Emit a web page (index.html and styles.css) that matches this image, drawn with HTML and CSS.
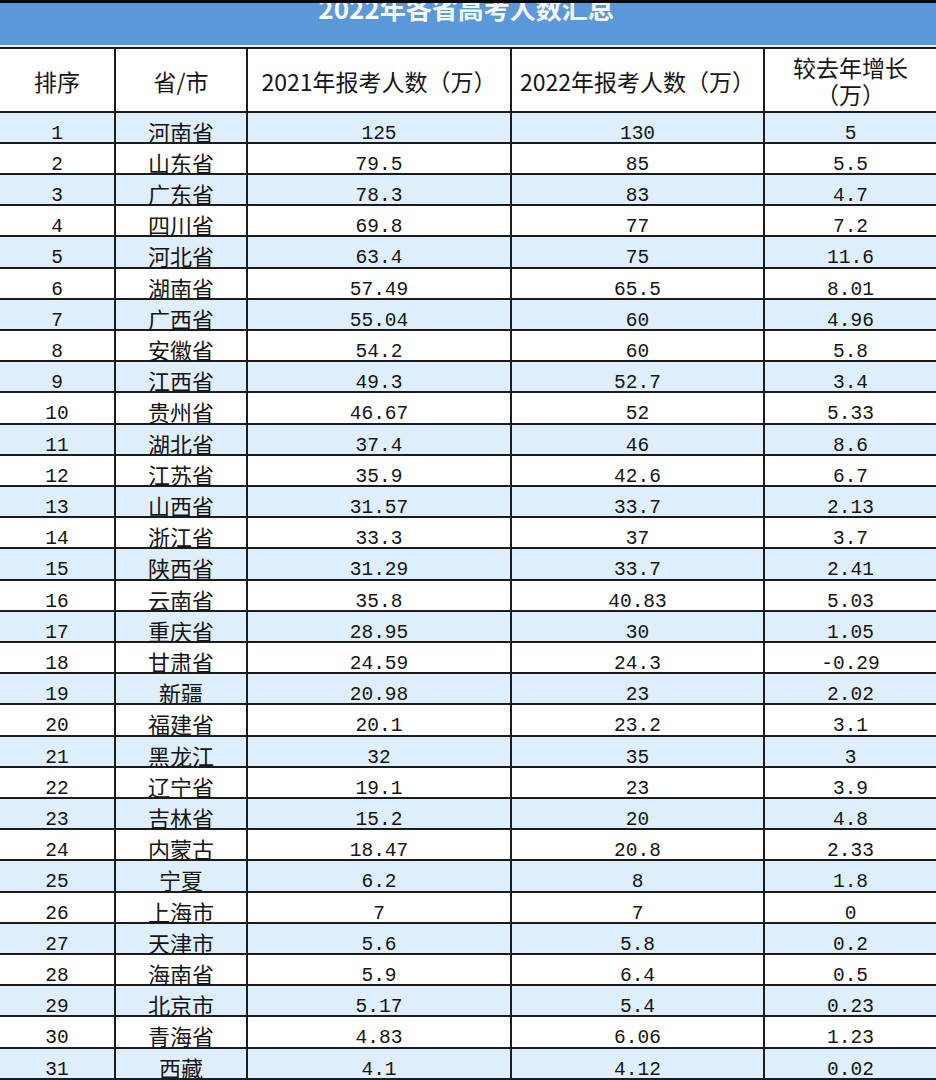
FILE: index.html
```html
<!DOCTYPE html>
<html lang="zh-CN">
<head>
<meta charset="utf-8">
<title>2022年各省高考人数汇总</title>
<link rel="stylesheet" href="styles.css">
</head>
<body>
<div class="page">
  <div class="title-bar"><span class="title-text">2022年各省高考人数汇总</span></div>
  <div class="gap"></div>
  <table class="sheet">
    <colgroup>
      <col class="c1"><col class="c2"><col class="c3"><col class="c4"><col class="c5">
    </colgroup>
    <thead>
      <tr>
        <th>排序</th>
        <th>省/市</th>
        <th>2021年报考人数（万）</th>
        <th>2022年报考人数（万）</th>
        <th><span class="hline">较去年增长</span><span class="hline">（万）</span></th>
      </tr>
    </thead>
    <tbody>
      <tr><td class="num">1</td><td class="cjk">河南省</td><td class="num">125</td><td class="num">130</td><td class="num">5</td></tr>
      <tr><td class="num">2</td><td class="cjk">山东省</td><td class="num">79.5</td><td class="num">85</td><td class="num">5.5</td></tr>
      <tr><td class="num">3</td><td class="cjk">广东省</td><td class="num">78.3</td><td class="num">83</td><td class="num">4.7</td></tr>
      <tr><td class="num">4</td><td class="cjk">四川省</td><td class="num">69.8</td><td class="num">77</td><td class="num">7.2</td></tr>
      <tr><td class="num">5</td><td class="cjk">河北省</td><td class="num">63.4</td><td class="num">75</td><td class="num">11.6</td></tr>
      <tr><td class="num">6</td><td class="cjk">湖南省</td><td class="num">57.49</td><td class="num">65.5</td><td class="num">8.01</td></tr>
      <tr><td class="num">7</td><td class="cjk">广西省</td><td class="num">55.04</td><td class="num">60</td><td class="num">4.96</td></tr>
      <tr><td class="num">8</td><td class="cjk">安徽省</td><td class="num">54.2</td><td class="num">60</td><td class="num">5.8</td></tr>
      <tr><td class="num">9</td><td class="cjk">江西省</td><td class="num">49.3</td><td class="num">52.7</td><td class="num">3.4</td></tr>
      <tr><td class="num">10</td><td class="cjk">贵州省</td><td class="num">46.67</td><td class="num">52</td><td class="num">5.33</td></tr>
      <tr><td class="num">11</td><td class="cjk">湖北省</td><td class="num">37.4</td><td class="num">46</td><td class="num">8.6</td></tr>
      <tr><td class="num">12</td><td class="cjk">江苏省</td><td class="num">35.9</td><td class="num">42.6</td><td class="num">6.7</td></tr>
      <tr><td class="num">13</td><td class="cjk">山西省</td><td class="num">31.57</td><td class="num">33.7</td><td class="num">2.13</td></tr>
      <tr><td class="num">14</td><td class="cjk">浙江省</td><td class="num">33.3</td><td class="num">37</td><td class="num">3.7</td></tr>
      <tr><td class="num">15</td><td class="cjk">陕西省</td><td class="num">31.29</td><td class="num">33.7</td><td class="num">2.41</td></tr>
      <tr><td class="num">16</td><td class="cjk">云南省</td><td class="num">35.8</td><td class="num">40.83</td><td class="num">5.03</td></tr>
      <tr><td class="num">17</td><td class="cjk">重庆省</td><td class="num">28.95</td><td class="num">30</td><td class="num">1.05</td></tr>
      <tr><td class="num">18</td><td class="cjk">甘肃省</td><td class="num">24.59</td><td class="num">24.3</td><td class="num">-0.29</td></tr>
      <tr><td class="num">19</td><td class="cjk">新疆</td><td class="num">20.98</td><td class="num">23</td><td class="num">2.02</td></tr>
      <tr><td class="num">20</td><td class="cjk">福建省</td><td class="num">20.1</td><td class="num">23.2</td><td class="num">3.1</td></tr>
      <tr><td class="num">21</td><td class="cjk">黑龙江</td><td class="num">32</td><td class="num">35</td><td class="num">3</td></tr>
      <tr><td class="num">22</td><td class="cjk">辽宁省</td><td class="num">19.1</td><td class="num">23</td><td class="num">3.9</td></tr>
      <tr><td class="num">23</td><td class="cjk">吉林省</td><td class="num">15.2</td><td class="num">20</td><td class="num">4.8</td></tr>
      <tr><td class="num">24</td><td class="cjk">内蒙古</td><td class="num">18.47</td><td class="num">20.8</td><td class="num">2.33</td></tr>
      <tr><td class="num">25</td><td class="cjk">宁夏</td><td class="num">6.2</td><td class="num">8</td><td class="num">1.8</td></tr>
      <tr><td class="num">26</td><td class="cjk">上海市</td><td class="num">7</td><td class="num">7</td><td class="num">0</td></tr>
      <tr><td class="num">27</td><td class="cjk">天津市</td><td class="num">5.6</td><td class="num">5.8</td><td class="num">0.2</td></tr>
      <tr><td class="num">28</td><td class="cjk">海南省</td><td class="num">5.9</td><td class="num">6.4</td><td class="num">0.5</td></tr>
      <tr><td class="num">29</td><td class="cjk">北京市</td><td class="num">5.17</td><td class="num">5.4</td><td class="num">0.23</td></tr>
      <tr><td class="num">30</td><td class="cjk">青海省</td><td class="num">4.83</td><td class="num">6.06</td><td class="num">1.23</td></tr>
      <tr><td class="num">31</td><td class="cjk">西藏</td><td class="num">4.1</td><td class="num">4.12</td><td class="num">0.02</td></tr>
    </tbody>
  </table>
</div>
</body>
</html>
```

FILE: styles.css
```css
html, body {
  margin: 0;
  padding: 0;
  background: #ffffff;
}

.page {
  width: 936px;
  height: 1080px;
  overflow: hidden;
  border-top: 3px solid #0a0a0a;
  box-sizing: border-box;
}

.title-bar {
  height: 42px;
  background: #5a98d8;
  overflow: hidden;
  display: flex;
  justify-content: center;
  align-items: flex-start;
}

.title-text {
  margin-top: -10px;
  margin-left: -4px;
  font-family: "Noto Sans CJK SC", sans-serif;
  font-weight: 700;
  font-size: 26px;
  line-height: 30px;
  color: #f4f8fd;
}

.gap {
  height: 2px;
  background: #e8f1fb;
}

.sheet {
  width: 936px;
  table-layout: fixed;
  border-collapse: separate;
  border-spacing: 0;
  border-top: 2px solid #1c1c1c;
  color: #151515;
}

.c1 { width: 116px; }
.c2 { width: 132px; }
.c3 { width: 264px; }
.c4 { width: 253px; }
.c5 { width: 171px; }

.sheet th,
.sheet td {
  padding: 0;
  text-align: center;
  border-bottom: 2px solid #1c1c1c;
  border-right: 2px solid #1c1c1c;
  white-space: nowrap;
}

.sheet th:last-child,
.sheet td:last-child {
  border-right: none;
}

.sheet thead tr {
  height: 64px;
}

.sheet th {
  font-family: "Noto Sans CJK SC", sans-serif;
  font-weight: 400;
  font-size: 23px;
  line-height: 28px;
  background: #ffffff;
  vertical-align: top;
  padding-top: 18px;
}

.sheet th:last-child {
  padding-top: 5px;
}

.hline {
  display: block;
  line-height: 27px;
  height: 27px;
}

.sheet tbody tr {
  height: 31px;
}

.sheet tbody tr:nth-child(5n) {
  height: 32px;
}

.sheet td {
  vertical-align: top;
}

.sheet tbody tr:nth-child(odd) td {
  background: #deeefb;
}

.sheet tbody tr:nth-child(even) td {
  background: #ffffff;
}

.num {
  font-family: "Liberation Mono", "DejaVu Sans Mono", monospace;
  font-size: 19.5px;
  line-height: 16px;
  padding-top: 13px !important;
}

.cjk {
  font-family: "Noto Sans CJK SC", sans-serif;
  font-size: 22px;
  line-height: 21px;
  padding-top: 8px !important;
}
```
